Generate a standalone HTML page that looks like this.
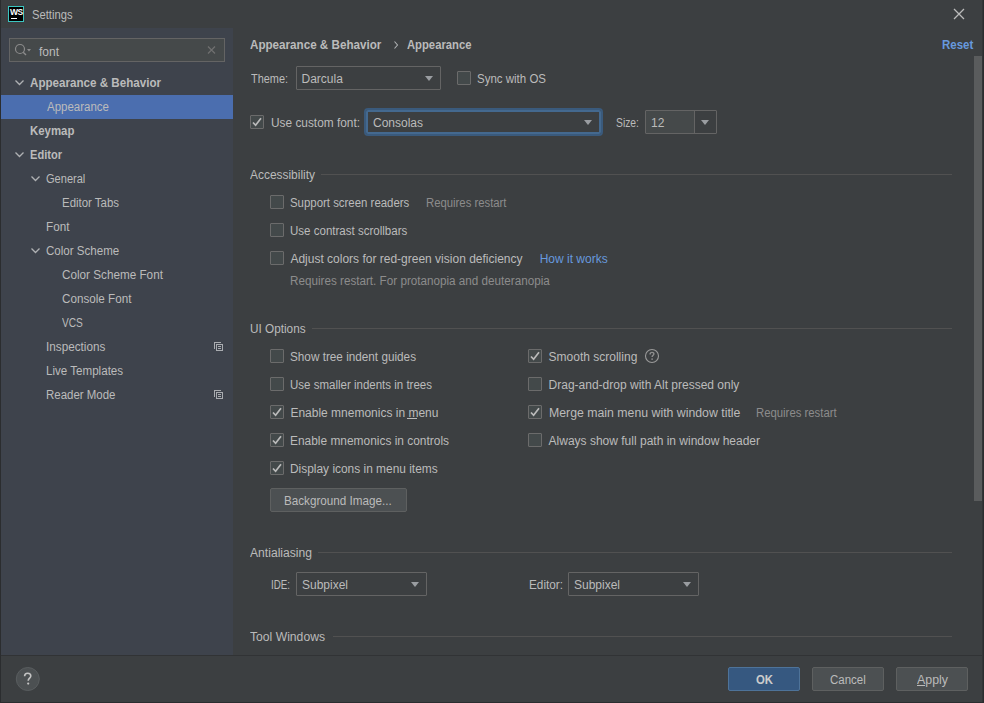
<!DOCTYPE html>
<html><head><meta charset="utf-8"><title>Settings</title>
<style>
html,body{margin:0;padding:0;}
body{width:984px;height:703px;overflow:hidden;background:#3C3F41;position:relative;font-family:"Liberation Sans", sans-serif;font-size:12px;color:#BBBBBB;}
.a{position:absolute;box-sizing:border-box;}
.t{position:absolute;white-space:nowrap;line-height:16px;font-size:12px;}
.cb{position:absolute;box-sizing:border-box;width:14px;height:14px;border:1px solid #6B6B6B;background:#43494A;border-radius:1px;}
.cb svg{position:absolute;left:-1px;top:-1px;}
.combo{position:absolute;box-sizing:border-box;border:1px solid #646464;background:#3C3F41;border-radius:1px;}
.arr{position:absolute;width:0;height:0;border-left:4.5px solid transparent;border-right:4.5px solid transparent;border-top:5px solid #9A9DA1;}
.sep{position:absolute;height:1px;background:#515151;}
.btn{position:absolute;box-sizing:border-box;border:1px solid #5E6060;background:#4C5052;border-radius:2px;}
</style></head><body>
<!-- left panel -->
<div class="a" style="left:0;top:28px;width:233px;height:627px;background:#3E434C;"></div>
<!-- selection -->
<div class="a" style="left:1px;top:95px;width:232px;height:24px;background:#4B6EAF;"></div>
<!-- bottom bar separator -->
<div class="a" style="left:0;top:655px;width:984px;height:1px;background:#313335;"></div>
<!-- window borders -->
<div class="a" style="left:0;top:0;width:1px;height:703px;background:#2B2D2F;"></div>
<div class="a" style="left:982px;top:0;width:1px;height:703px;background:#333537;"></div>
<div class="a" style="left:983px;top:0;width:1px;height:703px;background:#2B2D2F;"></div>
<div class="a" style="left:0;top:702px;width:984px;height:1px;background:#2B2D2F;"></div>

<!-- WS icon -->
<div class="a" style="left:8px;top:6px;width:16px;height:16px;background:#000;border:1px solid #3BC5C0;"></div>
<div class="a" style="left:10px;top:7px;font:bold 8.5px 'Liberation Sans',sans-serif;color:#fff;line-height:10px;letter-spacing:-0.4px;">WS</div>
<div class="a" style="left:11px;top:18px;width:6px;height:1px;background:#fff;"></div>
<!-- close X -->
<svg class="a" style="left:950px;top:5px;" width="18" height="18" viewBox="0 0 18 18"><path d="M4 4 L14 14 M14 4 L4 14" stroke="#BBBBBB" stroke-width="1.3"/></svg>

<!-- search field -->
<div class="a" style="left:9px;top:38px;width:216px;height:24px;border:1px solid #646464;background:#45494A;"></div>
<svg class="a" style="left:13px;top:42px;" width="20" height="16" viewBox="0 0 20 16"><circle cx="7" cy="7" r="4.5" fill="none" stroke="#8C8C8C" stroke-width="1.2"/><path d="M10.2 10.2 L13 13" stroke="#8C8C8C" stroke-width="1.4"/><path d="M14 7 L18 7 L16 9.5 Z" fill="#8C8C8C"/></svg>
<svg class="a" style="left:206px;top:44px;" width="12" height="12" viewBox="0 0 12 12"><path d="M2 2.5 L9 9.5 M9 2.5 L2 9.5" stroke="#707070" stroke-width="1.2"/></svg>

<!-- tree chevrons -->
<svg class="a" style="left:14px;top:78px;" width="12" height="10" viewBox="0 0 12 10"><path d="M1.5 2.5 L5.5 6.5 L9.5 2.5" fill="none" stroke="#AFB1B3" stroke-width="1.3"/></svg>
<svg class="a" style="left:14px;top:150px;" width="12" height="10" viewBox="0 0 12 10"><path d="M1.5 2.5 L5.5 6.5 L9.5 2.5" fill="none" stroke="#AFB1B3" stroke-width="1.3"/></svg>
<svg class="a" style="left:30px;top:174px;" width="12" height="10" viewBox="0 0 12 10"><path d="M1.5 2.5 L5.5 6.5 L9.5 2.5" fill="none" stroke="#AFB1B3" stroke-width="1.3"/></svg>
<svg class="a" style="left:30px;top:246px;" width="12" height="10" viewBox="0 0 12 10"><path d="M1.5 2.5 L5.5 6.5 L9.5 2.5" fill="none" stroke="#AFB1B3" stroke-width="1.3"/></svg>
<!-- project icons -->
<svg class="a" style="left:214px;top:342px;" width="10" height="10" viewBox="0 0 10 10" shape-rendering="crispEdges"><rect x="0" y="0" width="7" height="1" fill="#A9ACB0"/><rect x="0" y="0" width="1" height="7" fill="#A9ACB0"/><rect x="2" y="2" width="7" height="1" fill="#A9ACB0"/><rect x="2" y="8" width="7" height="1" fill="#A9ACB0"/><rect x="2" y="2" width="1" height="7" fill="#A9ACB0"/><rect x="8" y="2" width="1" height="7" fill="#A9ACB0"/><rect x="4" y="4" width="3" height="1" fill="#A9ACB0"/><rect x="4" y="6" width="3" height="1" fill="#A9ACB0"/></svg>
<svg class="a" style="left:214px;top:390px;" width="10" height="10" viewBox="0 0 10 10" shape-rendering="crispEdges"><rect x="0" y="0" width="7" height="1" fill="#A9ACB0"/><rect x="0" y="0" width="1" height="7" fill="#A9ACB0"/><rect x="2" y="2" width="7" height="1" fill="#A9ACB0"/><rect x="2" y="8" width="7" height="1" fill="#A9ACB0"/><rect x="2" y="2" width="1" height="7" fill="#A9ACB0"/><rect x="8" y="2" width="1" height="7" fill="#A9ACB0"/><rect x="4" y="4" width="3" height="1" fill="#A9ACB0"/><rect x="4" y="6" width="3" height="1" fill="#A9ACB0"/></svg>

<!-- breadcrumb arrow -->
<svg class="a" style="left:392px;top:40px;" width="8" height="10" viewBox="0 0 8 10"><path d="M2.5 1.5 L5.5 5 L2.5 8.5" fill="none" stroke="#AFB1B3" stroke-width="1.1"/></svg>

<!-- scrollbar -->
<div class="a" style="left:974px;top:56px;width:8px;height:445px;background:#5A5C5D;"></div>

<!-- Theme combo -->
<div class="combo" style="left:296px;top:66px;width:145px;height:24px;"></div>
<div class="arr" style="left:425px;top:76px;"></div>
<div class="cb" style="left:457px;top:71px;"></div>

<!-- custom font -->
<div class="cb" style="left:250px;top:115px;"><svg width="14" height="14" viewBox="0 0 14 14"><path d="M3 7.5 L5.6 10.3 L11 3.3" fill="none" stroke="#BBBBBB" stroke-width="1.7"/></svg></div>
<div class="a" style="left:364px;top:108px;width:239px;height:28px;border:2px solid #3A5A7C;border-radius:4px;background:#3C3F41;"></div>
<div class="a" style="left:366px;top:110px;width:235px;height:24px;border:2px solid #44698F;border-radius:2px;"></div>
<div class="arr" style="left:584px;top:120px;"></div>
<!-- size combo -->
<div class="combo" style="left:645px;top:110px;width:72px;height:24px;background:#45494A;"></div>
<div class="a" style="left:694px;top:111px;width:22px;height:22px;background:#3C3F41;border-left:1px solid #646464;"></div>
<div class="arr" style="left:701px;top:120px;"></div>

<!-- section separators -->
<div class="sep" style="left:321px;top:174px;width:631px;"></div>
<div class="sep" style="left:312px;top:328px;width:640px;"></div>
<div class="sep" style="left:318px;top:552px;width:634px;"></div>
<div class="sep" style="left:333px;top:636px;width:619px;"></div>

<!-- accessibility checkboxes -->
<div class="cb" style="left:270px;top:195px;"></div>
<div class="cb" style="left:270px;top:223px;"></div>
<div class="cb" style="left:270px;top:251px;"></div>

<!-- UI options checkboxes -->
<div class="cb" style="left:270px;top:349px;"></div>
<div class="cb" style="left:270px;top:377px;"></div>
<div class="cb" style="left:270px;top:405px;"><svg width="14" height="14" viewBox="0 0 14 14"><path d="M3 7.5 L5.6 10.3 L11 3.3" fill="none" stroke="#BBBBBB" stroke-width="1.7"/></svg></div>
<div class="cb" style="left:270px;top:433px;"><svg width="14" height="14" viewBox="0 0 14 14"><path d="M3 7.5 L5.6 10.3 L11 3.3" fill="none" stroke="#BBBBBB" stroke-width="1.7"/></svg></div>
<div class="cb" style="left:270px;top:461px;"><svg width="14" height="14" viewBox="0 0 14 14"><path d="M3 7.5 L5.6 10.3 L11 3.3" fill="none" stroke="#BBBBBB" stroke-width="1.7"/></svg></div>
<div class="cb" style="left:528px;top:349px;"><svg width="14" height="14" viewBox="0 0 14 14"><path d="M3 7.5 L5.6 10.3 L11 3.3" fill="none" stroke="#BBBBBB" stroke-width="1.7"/></svg></div>
<div class="cb" style="left:528px;top:377px;"></div>
<div class="cb" style="left:528px;top:405px;"><svg width="14" height="14" viewBox="0 0 14 14"><path d="M3 7.5 L5.6 10.3 L11 3.3" fill="none" stroke="#BBBBBB" stroke-width="1.7"/></svg></div>
<div class="cb" style="left:528px;top:433px;"></div>
<!-- help icon -->
<svg class="a" style="left:644px;top:348px;" width="16" height="16" viewBox="0 0 16 16"><circle cx="8" cy="8" r="6.5" fill="none" stroke="#9A9A9A" stroke-width="1.1"/><path d="M6.1 6.4 C6.1 4.9 7 4.4 8 4.4 C9.1 4.4 9.9 5 9.9 6 C9.9 7.2 8.1 7.3 8.1 9" fill="none" stroke="#8E8E8E" stroke-width="1.4"/><circle cx="8.1" cy="11.1" r="0.85" fill="#8E8E8E"/></svg>
<!-- mnemonic underline m -->
<div class="a" style="left:407px;top:418px;width:10px;height:1px;background:#BBBBBB;"></div>

<!-- background image button -->
<div class="btn" style="left:270px;top:488px;width:137px;height:24px;"></div>

<!-- antialiasing combos -->
<div class="combo" style="left:296px;top:572px;width:131px;height:24px;"></div>
<div class="arr" style="left:411px;top:582px;"></div>
<div class="combo" style="left:568px;top:572px;width:131px;height:24px;"></div>
<div class="arr" style="left:683px;top:582px;"></div>

<!-- bottom: help -->
<svg class="a" style="left:15px;top:666px;" width="26" height="26" viewBox="15 666 26 26"><circle cx="27.8" cy="679" r="11.5" fill="#4C5052" stroke="#595D5F" stroke-width="1"/><path d="M24.6 676.3 C24.6 674.1 26 673.2 27.7 673.2 C29.5 673.2 30.8 674.3 30.8 675.9 C30.8 678 28.2 678.3 28.2 680.8" fill="none" stroke="#C4C4C4" stroke-width="1.6"/><circle cx="28.2" cy="683.6" r="1.1" fill="#C4C4C4"/></svg>
<!-- buttons -->
<div class="btn" style="left:728px;top:667px;width:72px;height:24px;background:#365880;border-color:#4E7399;"></div>
<div class="btn" style="left:812px;top:667px;width:72px;height:24px;"></div>
<div class="btn" style="left:896px;top:667px;width:72px;height:24px;"></div>
<div class="a" style="left:917px;top:685px;width:8px;height:1px;background:#BBBBBB;"></div>

<span class="t" style="left:31.5px;top:7.0px;color:#BBBBBB;transform:scaleX(0.9341);transform-origin:0 0;">Settings</span>
<span class="t" style="left:39.0px;top:43.5px;color:#BBBBBB;">font</span>
<span class="t" style="left:30.4px;top:75.0px;color:#BBBBBB;font-weight:bold;transform:scaleX(0.9676);transform-origin:0 0;">Appearance &amp; Behavior</span>
<span class="t" style="left:47.0px;top:99.0px;color:#BBBBBB;transform:scaleX(0.9580);transform-origin:0 0;">Appearance</span>
<span class="t" style="left:30.4px;top:123.0px;color:#BBBBBB;font-weight:bold;transform:scaleX(0.9510);transform-origin:0 0;">Keymap</span>
<span class="t" style="left:30.4px;top:147.0px;color:#BBBBBB;font-weight:bold;transform:scaleX(0.9231);transform-origin:0 0;">Editor</span>
<span class="t" style="left:46.4px;top:171.0px;color:#BBBBBB;transform:scaleX(0.9206);transform-origin:0 0;">General</span>
<span class="t" style="left:62.4px;top:195.0px;color:#BBBBBB;transform:scaleX(0.9529);transform-origin:0 0;">Editor Tabs</span>
<span class="t" style="left:46.4px;top:219.0px;color:#BBBBBB;transform:scaleX(0.9745);transform-origin:0 0;">Font</span>
<span class="t" style="left:46.4px;top:243.0px;color:#BBBBBB;transform:scaleX(0.9628);transform-origin:0 0;">Color Scheme</span>
<span class="t" style="left:62.4px;top:267.0px;color:#BBBBBB;transform:scaleX(0.9760);transform-origin:0 0;">Color Scheme Font</span>
<span class="t" style="left:62.4px;top:291.0px;color:#BBBBBB;transform:scaleX(0.9724);transform-origin:0 0;">Console Font</span>
<span class="t" style="left:62.4px;top:315.0px;color:#BBBBBB;transform:scaleX(0.8471);transform-origin:0 0;">VCS</span>
<span class="t" style="left:46.4px;top:339.0px;color:#BBBBBB;transform:scaleX(0.9769);transform-origin:0 0;">Inspections</span>
<span class="t" style="left:46.4px;top:363.0px;color:#BBBBBB;transform:scaleX(0.9658);transform-origin:0 0;">Live Templates</span>
<span class="t" style="left:46.4px;top:387.0px;color:#BBBBBB;transform:scaleX(0.9545);transform-origin:0 0;">Reader Mode</span>
<span class="t" style="left:250.2px;top:36.8px;color:#BBBBBB;font-weight:bold;transform:scaleX(0.9699);transform-origin:0 0;">Appearance &amp; Behavior</span>
<span class="t" style="left:406.6px;top:36.8px;color:#BBBBBB;font-weight:bold;transform:scaleX(0.9375);transform-origin:0 0;">Appearance</span>
<span class="t" style="left:941.5px;top:36.6px;color:#6799DE;font-weight:bold;transform:scaleX(0.9546);transform-origin:0 0;">Reset</span>
<span class="t" style="left:251.0px;top:71.0px;color:#BBBBBB;transform:scaleX(0.9095);transform-origin:0 0;">Theme:</span>
<span class="t" style="left:301.5px;top:71.0px;color:#BBBBBB;">Darcula</span>
<span class="t" style="left:477.0px;top:71.0px;color:#BBBBBB;transform:scaleX(0.9580);transform-origin:0 0;">Sync with OS</span>
<span class="t" style="left:270.5px;top:115.0px;color:#BBBBBB;transform:scaleX(0.9885);transform-origin:0 0;">Use custom font:</span>
<span class="t" style="left:373.0px;top:115.0px;color:#BBBBBB;">Consolas</span>
<span class="t" style="left:616.0px;top:115.0px;color:#BBBBBB;transform:scaleX(0.8621);transform-origin:0 0;">Size:</span>
<span class="t" style="left:651.0px;top:115.0px;color:#BBBBBB;">12</span>
<span class="t" style="left:249.8px;top:167.3px;color:#BBBBBB;transform:scaleX(0.9947);transform-origin:0 0;">Accessibility</span>
<span class="t" style="left:290.4px;top:195.0px;color:#BBBBBB;transform:scaleX(0.9513);transform-origin:0 0;">Support screen readers</span>
<span class="t" style="left:426.4px;top:195.0px;color:#8C8C8C;transform:scaleX(0.9430);transform-origin:0 0;">Requires restart</span>
<span class="t" style="left:290.4px;top:223.0px;color:#BBBBBB;transform:scaleX(0.9612);transform-origin:0 0;">Use contrast scrollbars</span>
<span class="t" style="left:290.4px;top:251.0px;color:#BBBBBB;">Adjust colors for red-green vision deficiency</span>
<span class="t" style="left:539.7px;top:251.0px;color:#6799DE;">How it works</span>
<span class="t" style="left:290.4px;top:273.0px;color:#8C8C8C;transform:scaleX(0.9737);transform-origin:0 0;">Requires restart. For protanopia and deuteranopia</span>
<span class="t" style="left:250.0px;top:321.0px;color:#BBBBBB;transform:scaleX(0.9808);transform-origin:0 0;">UI Options</span>
<span class="t" style="left:290.4px;top:349.0px;color:#BBBBBB;transform:scaleX(0.9786);transform-origin:0 0;">Show tree indent guides</span>
<span class="t" style="left:290.4px;top:377.0px;color:#BBBBBB;transform:scaleX(0.9591);transform-origin:0 0;">Use smaller indents in trees</span>
<span class="t" style="left:290.4px;top:405.0px;color:#BBBBBB;">Enable mnemonics in menu</span>
<span class="t" style="left:290.4px;top:433.0px;color:#BBBBBB;transform:scaleX(0.9933);transform-origin:0 0;">Enable mnemonics in controls</span>
<span class="t" style="left:290.4px;top:461.0px;color:#BBBBBB;transform:scaleX(0.9931);transform-origin:0 0;">Display icons in menu items</span>
<span class="t" style="left:548.6px;top:349.0px;color:#BBBBBB;">Smooth scrolling</span>
<span class="t" style="left:548.6px;top:377.0px;color:#BBBBBB;">Drag-and-drop with Alt pressed only</span>
<span class="t" style="left:548.6px;top:405.0px;color:#BBBBBB;transform:scaleX(1.0249);transform-origin:0 0;">Merge main menu with window title</span>
<span class="t" style="left:548.6px;top:433.0px;color:#BBBBBB;">Always show full path in window header</span>
<span class="t" style="left:756.4px;top:405.0px;color:#8C8C8C;transform:scaleX(0.9442);transform-origin:0 0;">Requires restart</span>
<span class="t" style="left:284.3px;top:493.0px;color:#BBBBBB;transform:scaleX(0.9726);transform-origin:0 0;">Background Image...</span>
<span class="t" style="left:250.0px;top:545.0px;color:#BBBBBB;transform:scaleX(1.0102);transform-origin:0 0;">Antialiasing</span>
<span class="t" style="left:270.5px;top:577.0px;color:#BBBBBB;transform:scaleX(0.8141);transform-origin:0 0;">IDE:</span>
<span class="t" style="left:302.0px;top:577.0px;color:#BBBBBB;">Subpixel</span>
<span class="t" style="left:528.5px;top:577.0px;color:#BBBBBB;transform:scaleX(0.9803);transform-origin:0 0;">Editor:</span>
<span class="t" style="left:574.0px;top:577.0px;color:#BBBBBB;">Subpixel</span>
<span class="t" style="left:250.0px;top:629.0px;color:#BBBBBB;transform:scaleX(1.0131);transform-origin:0 0;">Tool Windows</span>
<span class="t" style="left:756.0px;top:672.0px;color:#CCCCCC;font-weight:bold;transform:scaleX(0.9444);transform-origin:0 0;">OK</span>
<span class="t" style="left:830.0px;top:672.0px;color:#BBBBBB;transform:scaleX(0.9557);transform-origin:0 0;">Cancel</span>
<span class="t" style="left:917.0px;top:672.0px;color:#BBBBBB;transform:scaleX(1.0327);transform-origin:0 0;">Apply</span>
</body></html>
